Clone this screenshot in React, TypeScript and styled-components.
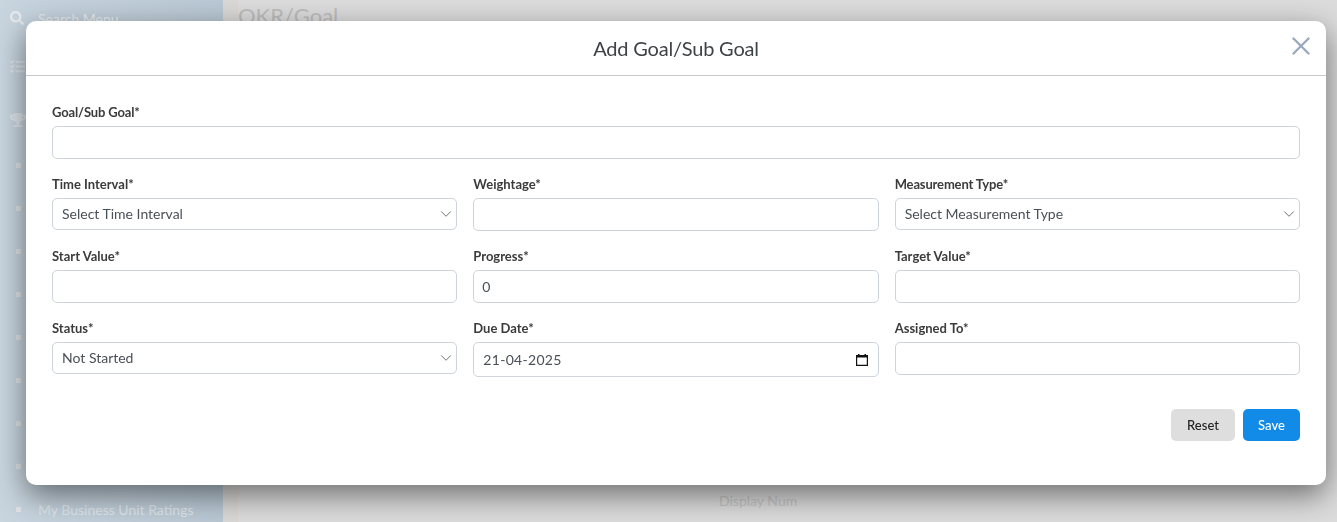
import React from 'react';
import styled, { createGlobalStyle } from 'styled-components';
import { ChevronDown, X } from 'lucide-react';
import { FaSearch, FaTasks, FaTrophy } from 'react-icons/fa';

const GlobalStyle = createGlobalStyle`
  html, body {
    margin: 0;
    height: 100%;
    overflow: hidden;
    font-family: Lato, "Liberation Sans", sans-serif;
  }
  * { box-sizing: border-box; }
`;

const Page = styled.div`
  display: flex;
  width: 1337px;
  height: 522px;
  overflow: hidden;
  background: #dcdcdc;
`;

const Sidebar = styled.aside`
  width: 223px;
  flex: none;
  background: linear-gradient(90deg, #c8d5df, #b9c8d4);
  color: #dfe6eb;
  font-size: 14px;
  padding: 10px 0 0 10px;
`;

const SearchRow = styled.div`
  display: flex;
  align-items: center;
  gap: 14px;
  height: 16px;
  margin-bottom: 14px;
  color: #e6ebef;
`;

const SideIcon = styled.div`
  display: flex;
  height: 53px;
  align-items: center;
  color: #dde4ea;
`;

const SubList = styled.ul`
  list-style: none;
  margin: -2px 0 0;
  padding: 0;
`;

const SubItem = styled.li`
  display: flex;
  align-items: center;
  gap: 17px;
  height: 43px;
  padding-left: 6px;

  &::before {
    content: '';
    width: 5px;
    height: 5px;
    background: #dfe3e6;
  }
`;

const Main = styled.main`
  flex: 1;
  padding-top: 4px;
  border-left: 15px solid #dad9d8;
  display: flex;
  flex-direction: column;
`;

const PageTitle = styled.h1`
  margin: 0;
  font-size: 22px;
  font-weight: 400;
  color: #bdbdbd;
  line-height: 24px;
`;

const Footer = styled.div`
  margin-top: auto;
  margin-left: 481px;
  height: 30px;
  font-size: 14px;
  color: #c4c4c4;
`;

const Overlay = styled.div`
  position: fixed;
  left: 26px;
  top: 21px;
  width: 1300px;
`;

const Modal = styled.div`
  background: #fff;
  height: 464px;
  border-radius: 10px;
  box-shadow: 0 10px 30px rgba(0, 0, 0, 0.5);
`;

const ModalHeader = styled.header`
  height: 55px;
  display: flex;
  align-items: center;
  justify-content: center;
  border-bottom: 1px solid #c8c8c8;
  position: relative;
`;

const ModalTitle = styled.h2`
  margin: 0;
  font-size: 20px;
  font-weight: 400;
  letter-spacing: -0.2px;
  color: #3f4347;
`;

const CloseButton = styled.button`
  position: absolute;
  right: 9px;
  top: 10px;
  width: 32px;
  height: 32px;
  padding: 0;
  border: 0;
  background: none;
  color: #9aa9bd;
`;

const ModalBody = styled.form`
  padding: 28px 26px 0;
`;

const Grid = styled.div`
  display: grid;
  grid-template-columns: repeat(3, 1fr);
  column-gap: 16px;
`;

const Field = styled.div<{ $wide?: boolean }>`
  grid-column: ${p => (p.$wide ? '1 / -1' : 'auto')};
  height: 72px;
`;

const Label = styled.label<{ $tight?: boolean }>`
  display: block;
  font-size: 13px;
  font-weight: 700;
  line-height: 16px;
  letter-spacing: ${p => (p.$tight ? -0.15 : 0)}px;
  margin-bottom: 6px;
  color: #3b3b3b;
`;

const Input = styled.input<{ $tall?: boolean; $spaced?: boolean }>`
  display: block;
  width: 100%;
  height: ${p => (p.$tall ? 35 : 33)}px;
  padding: 0 ${p => (p.$spaced ? 9 : 8)}px;
  border: 1px solid #ced4da;
  border-radius: 5px;
  background: #fff;
  font-family: inherit;
  font-size: 14px;
  color: #495057;
  letter-spacing: ${p => (p.$spaced ? 0.3 : 0)}px;
`;

const FieldWrap = styled.div`
  position: relative;
`;

const Select = styled.select`
  display: block;
  width: 100%;
  height: 32px;
  padding: 0 9px 2px;
  border: 1px solid #ced4da;
  border-radius: 5px;
  background: #fff;
  font-family: inherit;
  font-size: 14px;
  color: #495057;
  appearance: none;
`;

const SelectArrow = styled(ChevronDown)`
  position: absolute;
  right: 1px;
  top: 7px;
  width: 20px;
  height: 18px;
  color: #5f6469;
  pointer-events: none;
`;

const DateIcon = styled.svg`
  position: absolute;
  right: 11px;
  top: 12px;
  width: 12px;
  height: 12px;
`;

const Actions = styled.div`
  display: flex;
  justify-content: flex-end;
  gap: 8px;
  margin-top: 17px;
`;

const Button = styled.button<{ $primary?: boolean }>`
  height: 32px;
  padding: 0 15px;
  min-width: ${p => (p.$primary ? 57 : 64)}px;
  border: 0;
  border-radius: 5px;
  background: ${p => (p.$primary ? '#128ae8' : '#dedede')};
  color: ${p => (p.$primary ? '#fff' : '#222')};
  font-family: inherit;
  font-size: 13px;
  font-weight: 500;
`;

const subItems = ['', '', '', '', '', '', '', '', 'My Business Unit Ratings'];

export default function App() {
  return (
    <Page>
      <GlobalStyle />
      <Sidebar>
        <SearchRow>
          <FaSearch size={14} />
          Search Menu
        </SearchRow>
        <SideIcon>
          <FaTasks size={15} />
        </SideIcon>
        <SideIcon>
          <FaTrophy size={16} />
        </SideIcon>
        <SubList>
          {subItems.map((item, i) => (
            <SubItem key={i}>{item}</SubItem>
          ))}
        </SubList>
      </Sidebar>
      <Main>
        <PageTitle>OKR/Goal</PageTitle>
        <Footer>Display Num</Footer>
      </Main>
      <Overlay>
        <Modal>
          <ModalHeader>
            <ModalTitle>Add Goal/Sub Goal</ModalTitle>
            <CloseButton type="button" aria-label="Close">
              <X size={30} strokeWidth={1.9} />
            </CloseButton>
          </ModalHeader>
          <ModalBody>
            <Grid>
              <Field $wide>
                <Label $tight>Goal/Sub Goal*</Label>
                <Input />
              </Field>
              <Field>
                <Label>Time Interval*</Label>
                <FieldWrap>
                  <Select defaultValue="">
                    <option value="">Select Time Interval</option>
                  </Select>
                  <SelectArrow strokeWidth={1.2} />
                </FieldWrap>
              </Field>
              <Field>
                <Label>Weightage*</Label>
                <Input />
              </Field>
              <Field>
                <Label $tight>Measurement Type*</Label>
                <FieldWrap>
                  <Select defaultValue="">
                    <option value="">Select Measurement Type</option>
                  </Select>
                  <SelectArrow strokeWidth={1.2} />
                </FieldWrap>
              </Field>
              <Field>
                <Label>Start Value*</Label>
                <Input />
              </Field>
              <Field>
                <Label>Progress*</Label>
                <Input defaultValue="0" />
              </Field>
              <Field>
                <Label>Target Value*</Label>
                <Input />
              </Field>
              <Field>
                <Label>Status*</Label>
                <FieldWrap>
                  <Select defaultValue="Not Started">
                    <option>Not Started</option>
                  </Select>
                  <SelectArrow strokeWidth={1.2} />
                </FieldWrap>
              </Field>
              <Field>
                <Label>Due Date*</Label>
                <FieldWrap>
                  <Input $tall $spaced defaultValue="21-04-2025" />
                  <DateIcon viewBox="0 0 12 12">
                    <path
                      fill="#111"
                      fillRule="evenodd"
                      d="M2 0h1.5v1h5V0H10v1h2v11H0V1h2zM1.2 3.6v7.2h9.6V3.6z"
                    />
                  </DateIcon>
                </FieldWrap>
              </Field>
              <Field>
                <Label>Assigned To*</Label>
                <Input />
              </Field>
            </Grid>
            <Actions>
              <Button type="button">Reset</Button>
              <Button type="button" $primary>Save</Button>
            </Actions>
          </ModalBody>
        </Modal>
      </Overlay>
    </Page>
  );
}
